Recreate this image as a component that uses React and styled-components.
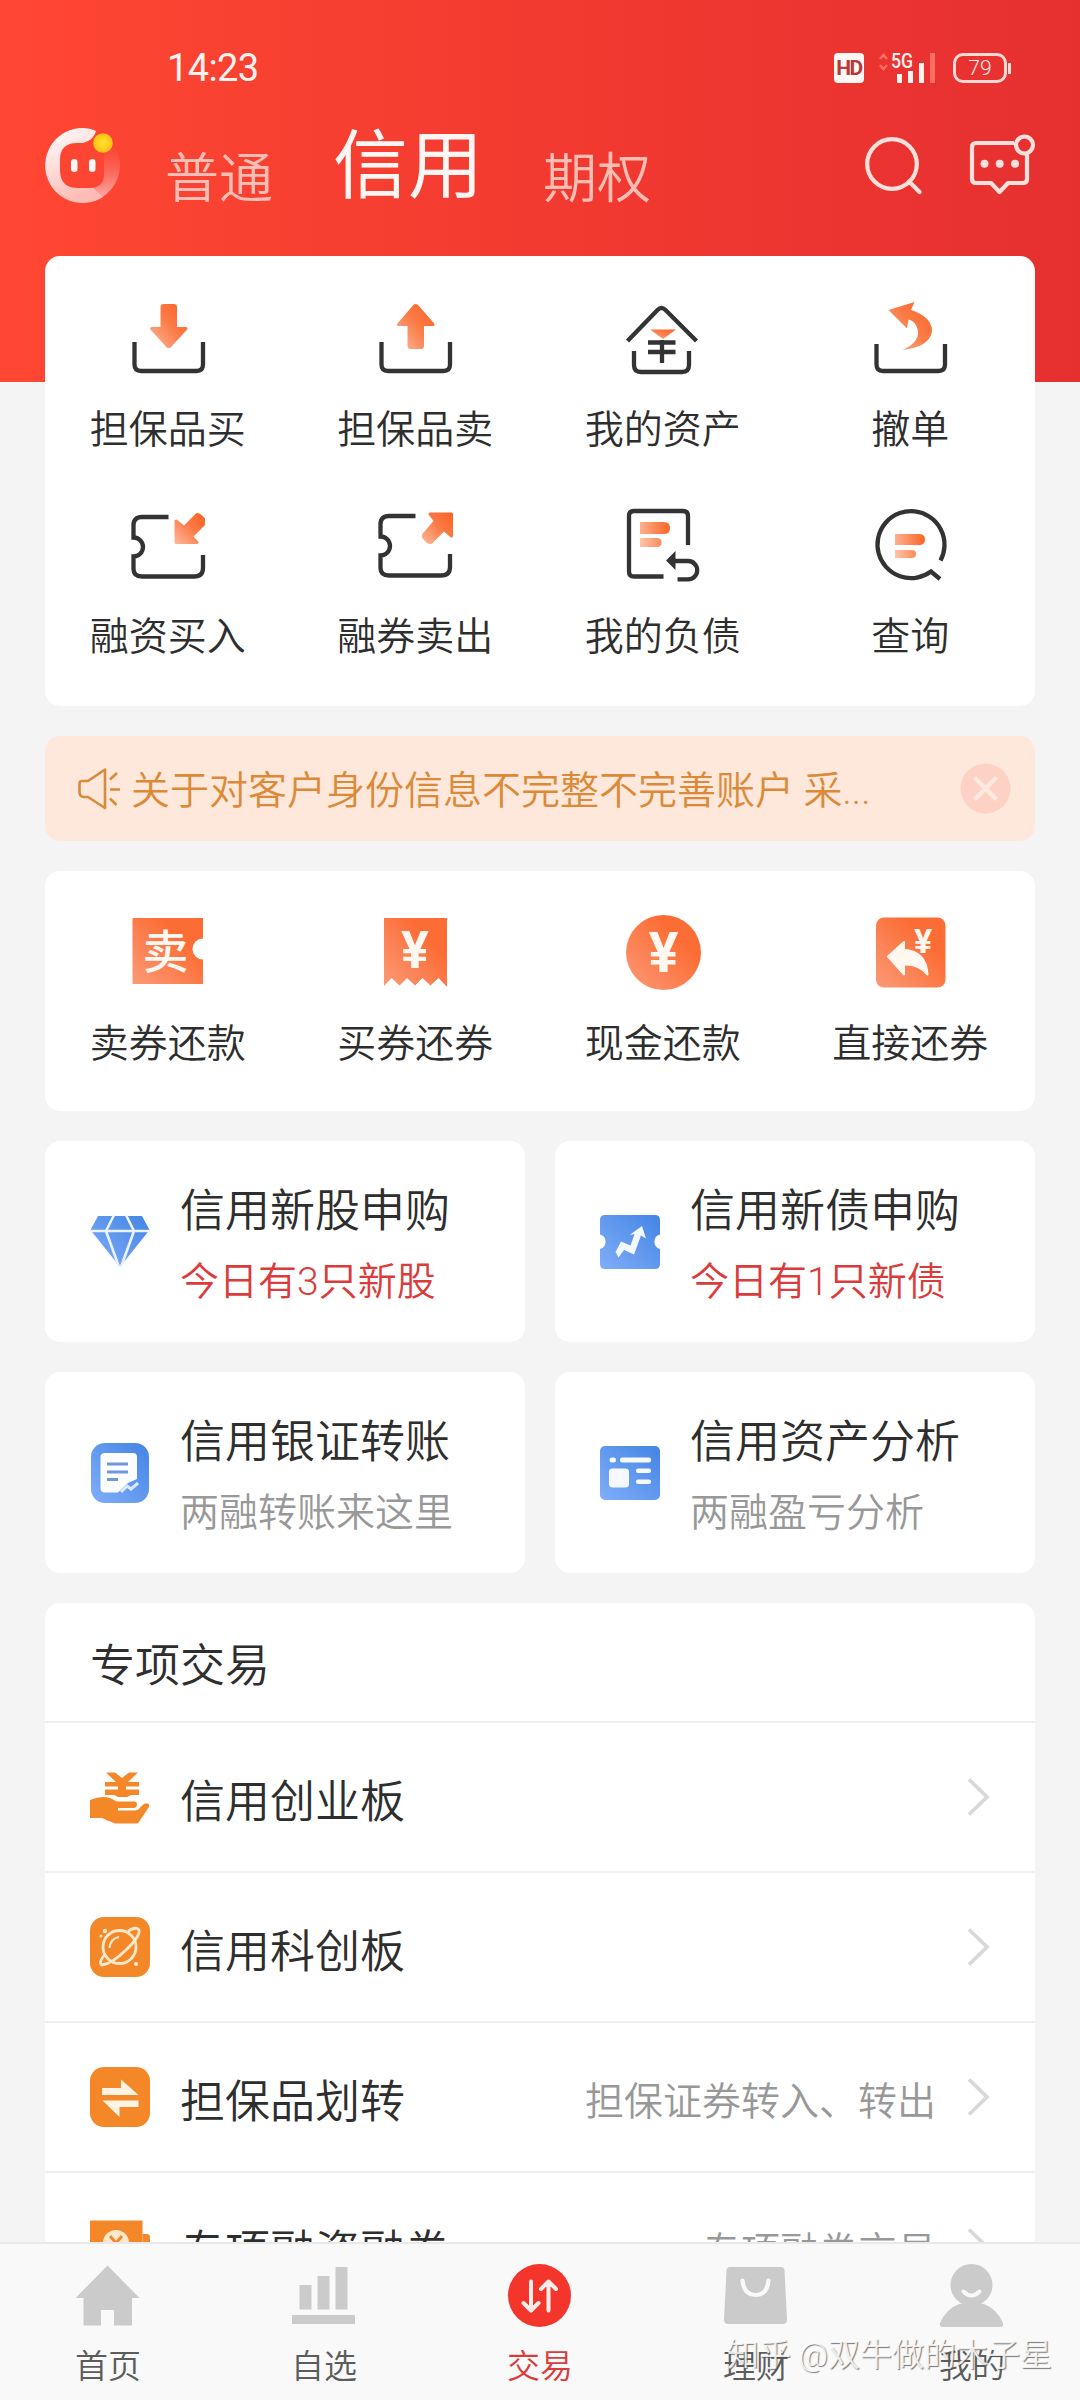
import React from 'react';
import styled, { createGlobalStyle } from 'styled-components';


// Styles
const GlobalStyle = createGlobalStyle`
    * {
        box-sizing: border-box;
    }
    body {
        margin: 0;
        background-color: #F4F4F4;
        font-family: Roboto, "Noto Sans CJK SC", sans-serif;
        font-weight: 350;
        color: #2E2E2E;
    }
    svg {
        display: block;
        flex: none;
        overflow: visible;
    }
`;

const Page = styled.div`
    position: relative;
    display: flex;
    flex-direction: column;
    width: 1080px;
    height: 2400px;
    overflow: hidden;
`;

const ScrollArea = styled.div`
    flex: 1;
    min-height: 0;
    overflow: hidden;
`;

const Header = styled.header`
    height: 382px;
    background: linear-gradient(90deg, #FF4733 0%, #F23A30 50%, #E63030 100%);
`;

const StatusBar = styled.div`
    display: flex;
    align-items: center;
    height: 106px;
    padding: 30px 69px 0 167px;
    color: #FFF3F0;
`;

const Clock = styled.span`
    flex: 1;
    font-size: 38px;
    font-weight: 400;
    letter-spacing: -0.6px;
`;

const HdBadge = styled.span`
    width: 30px;
    height: 30px;
    margin-right: 15px;
    border-radius: 4px;
    background-color: #FFF8F6;
    color: #B53A38;
    font-size: 21px;
    font-weight: 700;
    line-height: 31px;
    letter-spacing: -1.5px;
    text-align: center;
`;

const Battery = styled.span`
    width: 54px;
    height: 30px;
    margin-left: 18px;
    border: 3px solid #FFD9D4;
    border-radius: 10px;
    font-size: 21px;
    line-height: 25px;
    text-align: center;
`;

const BatteryNub = styled.span`
    width: 3px;
    height: 11px;
    margin-left: 1px;
    background-color: #FFD9D4;
`;

const TopBar = styled.div`
    display: flex;
    align-items: flex-start;
    padding: 0 47px 0 45px;
`;

const LogoBox = styled.div`
    padding-top: 22px;
    margin-right: 45px;
`;

const Tabs = styled.nav`
    display: flex;
    flex: 1;
    gap: 60px;
`;

const Tab = styled.span`
    padding-top: ${(props) => (props.$active ? '20px' : '34px')};
    font-size: ${(props) => (props.$active ? '75px' : '54px')};
    font-weight: ${(props) => (props.$active ? 400 : 350)};
    line-height: 80px;
    color: ${(props) => (props.$active ? '#FFF5F3' : '#FFBDB4')};
`;

const TopIcons = styled.div`
    display: flex;
    gap: 46px;
    padding-top: 30px;
`;

const Content = styled.main`
    display: flex;
    flex-direction: column;
    gap: 30px;
    padding: 0 45px;
    margin-top: -126px;
`;

const Card = styled.section`
    flex: none;
    border-radius: 15px;
    background-color: #FFFFFF;
`;

const ActionGrid = styled(Card)`
    display: grid;
    grid-template-columns: repeat(4, 1fr);
    align-content: start;
    row-gap: 44px;
    height: ${(props) => props.$height};
    padding-top: ${(props) => props.$top};
`;

const Action = styled.div`
    display: flex;
    flex-direction: column;
    align-items: center;
    gap: 19px;
    font-size: 39px;
    line-height: 60px;
`;

const ActionLabel = styled.span`
    margin-right: 2px;
`;

const Notice = styled.section`
    display: flex;
    align-items: center;
    flex: none;
    height: 105px;
    padding: 0 24px 0 30px;
    border-radius: 15px;
    background-color: #FEE7DB;
`;

const NoticeText = styled.span`
    flex: 1;
    margin-left: 8px;
    font-size: 39px;
    line-height: 60px;
    padding-top: 4px;
    white-space: nowrap;
    color: #DC8A37;
`;

const CardGrid = styled.div`
    display: grid;
    grid-template-columns: 1fr 1fr;
    gap: 30px;
`;

const InfoCard = styled(Card)`
    display: flex;
    align-items: center;
    gap: 30px;
    height: 201px;
    padding-left: 45px;
`;

const InfoText = styled.div`
    display: flex;
    flex-direction: column;
    padding-top: 10px;
    line-height: 71px;
`;

const InfoTitle = styled.span`
    font-size: 45px;
`;

const InfoSub = styled.span`
    font-size: 39px;
    color: ${(props) => (props.$hot ? '#DB3B3B' : '#989898')};
`;

const ListHead = styled.div`
    height: 118px;
    padding: 5px 45px 0;
    font-size: 45px;
    line-height: 118px;
`;

const ListRow = styled.div`
    display: flex;
    align-items: center;
    height: 150px;
    padding: 0 44px 0 45px;
    border-top: 2px solid #EFEFEF;
`;

const RowTitle = styled.span`
    flex: 1;
    margin-left: 30px;
    padding-top: 2px;
    font-size: 45px;
`;

const RowSub = styled.span`
    margin-right: 31px;
    padding-top: 2px;
    font-size: 39px;
    color: #989898;
`;

const BottomNav = styled.footer`
    display: grid;
    grid-template-columns: repeat(5, 1fr);
    height: 158px;
    border-top: 2px solid #E9E9E9;
    background-color: #F9F9F9;
`;

const NavItem = styled.div`
    display: flex;
    flex-direction: column;
    align-items: center;
    padding-top: 18px;
    gap: 15px;
    font-size: 33px;
    line-height: 48px;
    color: ${(props) => (props.$active ? '#DB3B3B' : '#5C5C5C')};
`;

const Watermark = styled.div`
    position: absolute;
    right: 28px;
    bottom: 23px;
    font-size: 32px;
    line-height: 44px;
    color: rgba(255, 255, 255, 0.85);
    text-shadow: 1px 1px 1px rgba(80, 80, 80, 0.75);
`;


// Icons
const Defs = () => (
    <svg width="0" height="0" style={{ position: 'absolute' }}>
        <defs>
            <linearGradient id="orange" x1="1" y1="0" x2="0" y2="1">
                <stop offset="0" stopColor="#FC6426" />
                <stop offset="0.45" stopColor="#FB7A45" />
                <stop offset="1" stopColor="#FDB495" />
            </linearGradient>
            <linearGradient id="tile" x1="1" y1="0" x2="0" y2="1">
                <stop offset="0.3" stopColor="#FC6D35" />
                <stop offset="1" stopColor="#FC9A78" />
            </linearGradient>
            <linearGradient id="fade" x1="1" y1="0" x2="0" y2="0">
                <stop offset="0" stopColor="#FC6426" />
                <stop offset="1" stopColor="#FDB08E" />
            </linearGradient>
            <linearGradient id="blue" x1="1" y1="0" x2="0" y2="1">
                <stop offset="0" stopColor="#4384E4" />
                <stop offset="1" stopColor="#80AEF8" />
            </linearGradient>
            <linearGradient id="ring" x1="0" y1="0" x2="0.4" y2="1">
                <stop offset="0" stopColor="#FFFFFF" />
                <stop offset="1" stopColor="#FFBCB6" />
            </linearGradient>
            <linearGradient id="ringEnd" x1="0" y1="0" x2="0" y2="1">
                <stop offset="0" stopColor="#F76A60" stopOpacity="0.1" />
                <stop offset="1" stopColor="#FFBCB6" />
            </linearGradient>
            <radialGradient id="ball">
                <stop offset="0" stopColor="#FFE32E" />
                <stop offset="1" stopColor="#FFC014" />
            </radialGradient>
        </defs>
    </svg>
);

const Logo = () => (
    <svg width="75" height="75" viewBox="0 0 75 75">
        <path d="M75 37.500A37.500 37.500 0 0 1 45 74L40 60H44Q59 60 59 46V24L70 20Q75 28 75 37.500Z" fill="url(#ringEnd)" />
        <path d="M51 3Q45 0 37.500 0A37.500 37.500 0 1 0 58 69L48 60H33Q15 60 15 42V32Q15 15 32 15H38Q49 12 51 3Z" fill="url(#ring)" />
        <rect x="26" y="31" width="6.500" height="13" rx="3.200" fill="#FFF6F4" />
        <rect x="44" y="31" width="6.500" height="13" rx="3.200" fill="#FFF6F4" />
        <circle cx="58" cy="15" r="9.800" fill="url(#ball)" />
    </svg>
);

const Signal = () => (
    <svg width="56" height="30" viewBox="0 0 56 30" fill="#FFF3F0">
        <path d="M1 6l3.500-4L8 6M1 12l3.500 4L8 12" fill="none" stroke="#FF6D62" strokeWidth="2.500" />
        <text x="12" y="15" fontSize="20" fontWeight="500" textLength="22" lengthAdjust="spacingAndGlyphs">5G</text>
        <rect x="18" y="21" width="5" height="9" />
        <rect x="29" y="18" width="5" height="12" />
        <rect x="40" y="10" width="5" height="20" />
        <rect x="51" y="0" width="5" height="30" fill="#FF6D62" />
    </svg>
);

const SearchIcon = () => (
    <svg width="60" height="60" viewBox="0 0 60 60" fill="none" stroke="#FFE0DC" strokeWidth="4.200" strokeLinecap="round">
        <circle cx="30" cy="28" r="24.800" />
        <path d="M47 45.500L57.500 56" />
    </svg>
);

const MessageIcon = () => (
    <svg width="65" height="66" viewBox="0 0 65 66" fill="none" stroke="#FFE0DC" strokeWidth="4.200" strokeLinejoin="round">
        <path d="M46 7H8Q4 7 4 11V43Q4 47 8 47H23L31.500 56L40 47H55Q59 47 59 43V19" />
        <circle cx="56.500" cy="9" r="8.500" />
        <g fill="#FFE0DC" stroke="none">
            <circle cx="16.500" cy="27.700" r="4" />
            <circle cx="31.700" cy="27.700" r="4" />
            <circle cx="47" cy="27.700" r="4" />
        </g>
    </svg>
);

const LineIcon = ({ children }) => (
    <svg width="84" height="84" viewBox="0 0 84 84" fill="none" stroke="#333" strokeWidth="4.300">
        {children}
    </svg>
);

const Accent = ({ d, fill = 'url(#orange)' }) => (
    <path d={d} fill={fill} stroke={fill} strokeWidth="3" strokeLinejoin="round" />
);

const Tray = ({ top = 45 }) => (
    <path d={`M7.500 ${top}V67.500Q7.500 74 14 74H69.500Q76 74 76 67.500V${top}`} />
);

const BuyIcon = () => (
    <LineIcon>
        <Tray />
        <Accent d="M35 10Q35 8.500 36.500 8.500H47Q48.500 8.500 48.500 10V31.500H59L43 49Q41.700 50 40.500 49L24.500 31.500H35Z" />
    </LineIcon>
);

const SellIcon = () => (
    <LineIcon>
        <Tray />
        <Accent d="M35 49Q35 50.500 36.500 50.500H47Q48.500 50.500 48.500 49V27.500H59L43 9Q41.700 8 40.500 9L24.500 27.500H35Z" />
    </LineIcon>
);

const AssetIcon = () => (
    <LineIcon>
        <path d="M5.500 44L35.500 13Q39.500 9 43.500 13L74.500 44" />
        <path d="M12 54V68Q12 75 19 75H60Q67 75 67 68V54" />
        <path d="M28 32.500H54L41 42Z" fill="url(#orange)" stroke="none" />
        <path d="M26 45.500H53.500M26 55H53.500M40 43V66" />
    </LineIcon>
);

const CancelIcon = () => (
    <LineIcon>
        <Tray top={47} />
        <path d="M19.500 13L45.500 5L42 13Q63 20 63 34Q61 50 33 53Q50 46 49 34Q47 24 39.500 22.500L38 31.500Z" fill="url(#orange)" stroke="none" />
    </LineIcon>
);

const ticketPath = 'M41.500 13H15Q6.500 13 6.500 21V33.500A9.500 9.500 0 0 1 6.500 52.500V65Q6.500 72.500 15 72.500H67Q76 72.500 76 64V51';

const MarginBuyIcon = () => (
    <LineIcon>
        <path d={ticketPath} />
        <Accent d="M49 17L57 23.500L70 10.500Q72 10 76.500 15V20.500L64.500 32.500L70 38.500H49Z" />
    </LineIcon>
);

const MarginSellIcon = () => (
    <LineIcon>
        <path d={ticketPath} transform="translate(0 -1)" />
        <Accent d="M56 10H77.500V32L70 25.500L57 38.500Q54 39 49.500 33V31L61.500 17Z" />
    </LineIcon>
);

const DebtIcon = () => (
    <LineIcon>
        <path d="M41.500 72.500H12Q7 72.500 7 67.500V12Q7 7 12 7H61Q66 7 66 12V41" />
        <path d="M18 18H42Q48 18 48 24T42 30H18Z" fill="url(#fade)" stroke="none" />
        <path d="M18 34H35Q39.500 34 39.500 38.500T35 43H18Z" fill="url(#fade)" stroke="none" opacity="0.75" />
        <path d="M44 56.500L53.500 47V66Z" fill="#333" stroke="none" />
        <path d="M52 57H66A9.200 9.200 0 0 1 66 75.400H55.500" />
    </LineIcon>
);

const QueryIcon = () => (
    <LineIcon>
        <path d="M71.500 56.500A33.500 33.500 0 1 0 62 67.500L71 75" />
        <path d="M26 30H50Q56 30 56 35.500T50 41H26Z" fill="url(#fade)" stroke="none" />
        <path d="M26 46H43Q47 46 47 50T43 54H26Z" fill="url(#fade)" stroke="none" opacity="0.75" />
    </LineIcon>
);

const SolidIcon = ({ children }) => (
    <svg width="84" height="84" viewBox="0 0 84 84" fill="url(#tile)">
        {children}
    </svg>
);

const SellRepayIcon = () => (
    <SolidIcon>
        <path d="M5.500 7H76V27.500A10.500 10.500 0 0 0 76 48.500V73H5.500Z" />
        <text x="38.500" y="57" fontSize="46" fontWeight="500" fill="#FFF8F0" textAnchor="middle">卖</text>
    </SolidIcon>
);

const BuyReturnIcon = () => (
    <SolidIcon>
        <path d="M10 7H73V76L64.500 67L56.500 74.500L48.500 67L41 74.500L33 67L25.500 74.500L17.500 67L10 75Z" />
        <text x="41" y="57" fontSize="52" fontWeight="700" fill="#FFF8F0" textAnchor="middle">¥</text>
    </SolidIcon>
);

const CashIcon = () => (
    <SolidIcon>
        <circle cx="41.500" cy="41.500" r="37.500" />
        <text x="41.500" y="61" fontSize="56" fontWeight="700" fill="#FFF8F0" textAnchor="middle">¥</text>
    </SolidIcon>
);

const DirectReturnIcon = () => (
    <SolidIcon>
        <rect x="7" y="6.500" width="69.500" height="70" rx="8" />
        <path d="M19 45.500L35 31V39Q57 40 58.500 63.500Q50 53 35 53.500V63.500Z" fill="#FFF8F0" stroke="#FFF8F0" strokeWidth="2" strokeLinejoin="round" />
        <text x="54" y="42" fontSize="34" fontWeight="700" fill="#FFF8F0" textAnchor="middle">¥</text>
    </SolidIcon>
);

const SpeakerIcon = () => (
    <svg width="48" height="48" viewBox="0 0 48 48" fill="none" stroke="#D98A3C" strokeWidth="2.600">
        <path d="M4.500 18.500Q4.500 16 7 16H13L30 4.500V43L13 32H9Q4.500 32 4.500 27Z" strokeLinejoin="round" />
        <path d="M35 14.500L42 8M35 24.500H45M35 33.500L41.500 40" />
    </svg>
);

const CloseIcon = () => (
    <svg width="51" height="51" viewBox="0 0 51 51">
        <circle cx="25.500" cy="25.500" r="25" fill="#FDD2C5" />
        <path d="M14.500 14.500L36.500 36.500M36.500 14.500L14.500 36.500" stroke="#FEE9DF" strokeWidth="4.500" />
    </svg>
);

const SmallIcon = ({ children, fill = 'url(#blue)' }) => (
    <svg width="60" height="60" viewBox="0 0 60 60" fill={fill}>
        {children}
    </svg>
);

const DiamondIcon = () => (
    <SmallIcon>
        <path d="M8 4H52L59.500 18L30 55L0.500 18Z" />
        <path d="M0 19H60M24 3L16 19L29 55M36 3L44 19L31 55" fill="none" stroke="#EAF3FF" strokeWidth="2.600" />
    </SmallIcon>
);

const BondIcon = () => (
    <SmallIcon>
        <path d="M5 3H55Q60 3 60 8V22.500A7.500 7.500 0 0 0 60 37V52Q60 57 55 57H5Q0 57 0 52V37A7.500 7.500 0 0 0 0 22.500V8Q0 3 5 3Z" />
        <path d="M15.500 40L21 29.500L30.500 33.500L34.500 22L29.500 23L42 14L46 26.500L41 23.500L34 42.500L24 38L18.500 45.500Z" fill="#F2F8FF" />
    </SmallIcon>
);

const TransferDocIcon = () => (
    <SmallIcon>
        <rect x="1" y="0" width="58" height="60" rx="14" />
        <path d="M15 10H43Q47 10 47 14V36L38 40L28 49.500H15Q10.500 49.500 10.500 45V14Q10.500 10 15 10Z" fill="#FBFDFF" />
        <path d="M17 21H38M17 29H38M17 36.500H28" fill="none" stroke="#6F98DC" strokeWidth="2.800" />
        <path d="M31 49L37 43L41 46L48 40" fill="none" stroke="#DCE9FF" strokeWidth="3" />
    </SmallIcon>
);

const AnalysisIcon = () => (
    <SmallIcon>
        <rect x="0" y="3" width="60" height="54" rx="5" />
        <g fill="#F5F9FF">
            <rect x="9.500" y="14.500" width="6.500" height="5" rx="2.500" />
            <rect x="20" y="14.500" width="31" height="5" rx="2" />
            <rect x="9" y="25.500" width="20" height="19" rx="3.500" />
            <rect x="36" y="25.500" width="15" height="4.500" rx="2" />
            <rect x="36" y="36.500" width="15" height="4.500" rx="2" />
        </g>
    </SmallIcon>
);

const HandIcon = () => (
    <SmallIcon fill="#F48829">
        <path d="M16 5.500H25L32 11L39 5.500H48L38 15H49V19.500H36V22.500H49V28H41L37 30H28L24 28H15V22.500H28V19.500H15V15H26Z" />
        <path d="M0 33Q12 28 20 31L27 34.500H44Q47 34.500 47 37.500T44 41H28V43.500H45Q49 43 50.500 40L54 37Q59 35 59.500 39L49 55Q48 56.500 46 56.500H25Q16 53 12 51H0Z" />
    </SmallIcon>
);

const PlanetIcon = () => (
    <SmallIcon fill="#F48829">
        <rect width="60" height="60" rx="14" />
        <g fill="none" stroke="#FFE9CB" strokeWidth="2.800">
            <circle cx="29.500" cy="30" r="16.500" />
            <path d="M38 14Q47 9 49 13Q50.500 19 36 33T12 48Q8 46 15 37" />
            <path d="M19.500 31Q20 22 29 20" strokeWidth="2" />
        </g>
        <circle cx="15" cy="14" r="2.200" fill="#FFE9CB" />
        <circle cx="11" cy="19" r="1.500" fill="#FFE9CB" />
        <circle cx="46" cy="47" r="2" fill="#FFE9CB" />
    </SmallIcon>
);

const SwapIcon = () => (
    <SmallIcon fill="#F48829">
        <rect width="60" height="60" rx="14" />
        <path d="M12 21H31V12.500L48.500 28H12ZM48.500 33.500V40H29.500V50L12.500 33.500Z" fill="#FFF4E4" />
    </SmallIcon>
);

const WalletIcon = () => (
    <SmallIcon fill="#F48829">
        <path d="M0 3.500H52.500V56H0Z" />
        <path d="M52.500 17H57Q60 17 60 20V40H52.500Z" />
        <circle cx="26" cy="26" r="13" fill="#FFE9CB" />
        <path d="M20 19L26 26L32 19" fill="none" stroke="#F48829" strokeWidth="3" />
    </SmallIcon>
);

const Chevron = () => (
    <svg width="24" height="40" viewBox="0 0 24 40" fill="none" stroke="#D8D8D8" strokeWidth="3.800">
        <path d="M2 2.500L20 20L2 37.500" />
    </svg>
);

const NavIcon = ({ children }) => (
    <svg width="66" height="66" viewBox="0 0 66 66" fill="#CBCBCB">
        {children}
    </svg>
);

const HomeIcon = () => (
    <NavIcon>
        <path d="M32.500 3.500L64.500 36H57V63.500H39V48H26V63.500H8.500V36H0.500Z" />
    </NavIcon>
);

const WatchIcon = () => (
    <NavIcon>
        <rect x="8.500" y="23" width="12" height="24.500" />
        <rect x="26.500" y="14" width="12" height="33.500" />
        <rect x="44.500" y="5" width="12" height="42.500" />
        <rect x="1" y="53" width="63" height="9" />
    </NavIcon>
);

const TradeIcon = () => (
    <NavIcon>
        <circle cx="32.500" cy="33.500" r="31.500" fill="#F4352C" />
        <path d="M24 19.500V48M16.500 41L24 48.500L31.500 41M41.500 48.500V20M34 27L41.500 19.500L49 27" fill="none" stroke="#FFEDEA" strokeWidth="4" strokeLinecap="round" strokeLinejoin="round" />
    </NavIcon>
);

const BagIcon = () => (
    <NavIcon>
        <path d="M7 5H58Q61.500 5 61.500 8.500L64 57.500Q64 62 60 62H5Q1 62 1 57.500L3.500 8.500Q3.500 5 7 5Z" />
        <path d="M19.500 18.500Q21 33 32.500 33T45.500 18.500" fill="none" stroke="#F9F9F9" strokeWidth="4.200" strokeLinecap="round" />
    </NavIcon>
);

const MineIcon = () => (
    <NavIcon>
        <circle cx="32.500" cy="23" r="21" />
        <path d="M20 42Q32.500 39 45 42Q58 47 64 61Q65 65 61 65H4Q0 65 1 61Q7 47 20 42Z" />
        <path d="M24.500 29.500Q32.500 37.500 40.500 29.500" fill="none" stroke="#F9F9F9" strokeWidth="4" strokeLinecap="round" />
    </NavIcon>
);


// Data
const tradeActions = [
    { label: '担保品买', Icon: BuyIcon },
    { label: '担保品卖', Icon: SellIcon },
    { label: '我的资产', Icon: AssetIcon },
    { label: '撤单', Icon: CancelIcon },
    { label: '融资买入', Icon: MarginBuyIcon },
    { label: '融券卖出', Icon: MarginSellIcon },
    { label: '我的负债', Icon: DebtIcon },
    { label: '查询', Icon: QueryIcon },
];

const repayActions = [
    { label: '卖券还款', Icon: SellRepayIcon },
    { label: '买券还券', Icon: BuyReturnIcon },
    { label: '现金还款', Icon: CashIcon },
    { label: '直接还券', Icon: DirectReturnIcon },
];

const infoCards = [
    { title: '信用新股申购', sub: '今日有3只新股', hot: true, Icon: DiamondIcon },
    { title: '信用新债申购', sub: '今日有1只新债', hot: true, Icon: BondIcon },
    { title: '信用银证转账', sub: '两融转账来这里', Icon: TransferDocIcon },
    { title: '信用资产分析', sub: '两融盈亏分析', Icon: AnalysisIcon },
];

const specialRows = [
    { title: '信用创业板', Icon: HandIcon },
    { title: '信用科创板', Icon: PlanetIcon },
    { title: '担保品划转', sub: '担保证券转入、转出', Icon: SwapIcon },
    { title: '专项融资融券', sub: '专项融券交易', Icon: WalletIcon },
];

const navItems = [
    { label: '首页', Icon: HomeIcon },
    { label: '自选', Icon: WatchIcon },
    { label: '交易', Icon: TradeIcon, active: true },
    { label: '理财', Icon: BagIcon },
    { label: '我的', Icon: MineIcon },
];


const Actions = ({ items, height, top }) => (
    <ActionGrid $height={height} $top={top}>
        {items.map(({ label, Icon }) => (
            <Action key={label}>
                <Icon />
                <ActionLabel>{label}</ActionLabel>
            </Action>
        ))}
    </ActionGrid>
);


const PageHeader = () => (
    <Header>
        <StatusBar>
            <Clock>14:23</Clock>
            <HdBadge>HD</HdBadge>
            <Signal />
            <Battery>79</Battery>
            <BatteryNub />
        </StatusBar>
        <TopBar>
            <LogoBox><Logo /></LogoBox>
            <Tabs>
                <Tab>普通</Tab>
                <Tab $active>信用</Tab>
                <Tab>期权</Tab>
            </Tabs>
            <TopIcons>
                <SearchIcon />
                <MessageIcon />
            </TopIcons>
        </TopBar>
    </Header>
);


const App = () => {
    return (
        <Page>
            <GlobalStyle />
            <Defs />
            <ScrollArea>
                <PageHeader />
                <Content>
                    <Actions items={tradeActions} height="450px" top="41px" />
                    <Notice>
                        <SpeakerIcon />
                        <NoticeText>关于对客户身份信息不完整不完善账户 采...</NoticeText>
                        <CloseIcon />
                    </Notice>
                    <Actions items={repayActions} height="240px" top="40px" />
                    <CardGrid>
                        {infoCards.map(({ title, sub, hot, Icon }) => (
                            <InfoCard key={title}>
                                <Icon />
                                <InfoText>
                                    <InfoTitle>{title}</InfoTitle>
                                    <InfoSub $hot={hot}>{sub}</InfoSub>
                                </InfoText>
                            </InfoCard>
                        ))}
                    </CardGrid>
                    <Card>
                        <ListHead>专项交易</ListHead>
                        {specialRows.map(({ title, sub, Icon }) => (
                            <ListRow key={title}>
                                <Icon />
                                <RowTitle>{title}</RowTitle>
                                {sub && <RowSub>{sub}</RowSub>}
                                <Chevron />
                            </ListRow>
                        ))}
                    </Card>
                </Content>
            </ScrollArea>
            <BottomNav>
                {navItems.map(({ label, active, Icon }) => (
                    <NavItem key={label} $active={active}>
                        <Icon />
                        <span>{label}</span>
                    </NavItem>
                ))}
            </BottomNav>
            <Watermark>知乎 @双牛做的木子星</Watermark>
        </Page>
    );
};


export default App;
